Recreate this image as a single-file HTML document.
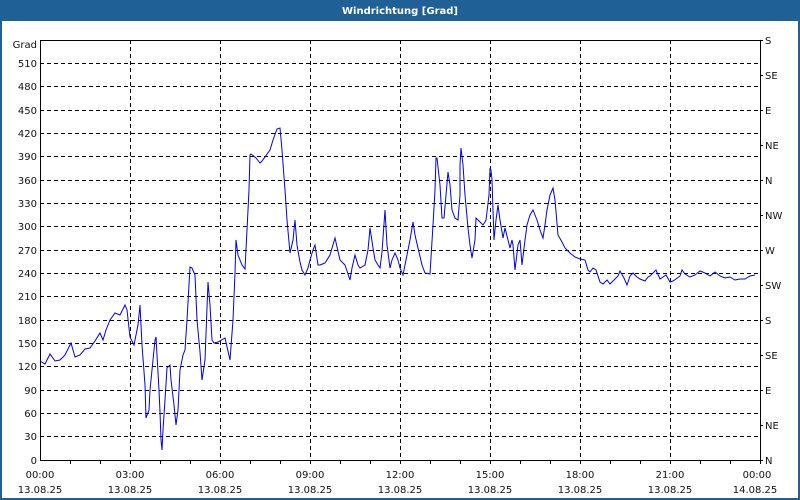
<!DOCTYPE html>
<html><head><meta charset="utf-8"><style>
html,body{margin:0;padding:0;background:#fff}
svg{display:block}
text{font-family:"DejaVu Sans","Liberation Sans",sans-serif;font-size:10px;fill:#111}
</style></head><body>
<svg width="800" height="500" viewBox="0 0 800 500" xmlns="http://www.w3.org/2000/svg">
<rect x="0" y="0" width="800" height="500" fill="#1f6096"/>
<rect x="2" y="21" width="796" height="477" fill="#fff"/>
<text x="400" y="14" text-anchor="middle" style="font-weight:bold;fill:#fff;font-size:10px">Windrichtung [Grad]</text>
<g stroke="#000" stroke-width="1" stroke-dasharray="4,3" fill="none" shape-rendering="crispEdges">
<path d="M40 436.5H760M40 413.5H760M40 390.5H760M40 366.5H760M40 343.5H760M40 320.5H760M40 296.5H760M40 273.5H760M40 250.5H760M40 226.5H760M40 203.5H760M40 180.5H760M40 156.5H760M40 133.5H760M40 110.5H760M40 86.5H760M40 63.5H760"/>
<path d="M130.5 40V460M220.5 40V460M310.5 40V460M400.5 40V460M490.5 40V460M580.5 40V460M670.5 40V460"/>
</g>
<g stroke="#000" stroke-width="1" fill="none" shape-rendering="crispEdges">
<path d="M40.5 40V460.5H760.5V40M40 40.5H760"/>
<path d="M70.5 460v4M100.5 460v4M130.5 460v4M160.5 460v4M190.5 460v4M220.5 460v4M250.5 460v4M280.5 460v4M310.5 460v4M340.5 460v4M370.5 460v4M400.5 460v4M430.5 460v4M460.5 460v4M490.5 460v4M520.5 460v4M550.5 460v4M580.5 460v4M610.5 460v4M640.5 460v4M670.5 460v4M700.5 460v4M730.5 460v4M760.5 460v4"/>
<path d="M760 40.5h3M760 75.5h3M760 110.5h3M760 145.5h3M760 180.5h3M760 215.5h3M760 250.5h3M760 285.5h3M760 320.5h3M760 355.5h3M760 390.5h3M760 425.5h3M760 460.5h3"/>
</g>
<g text-anchor="end">
<text x="37" y="48">Grad</text>
<text x="37" y="67">510</text><text x="37" y="90">480</text><text x="37" y="114">450</text><text x="37" y="137">420</text><text x="37" y="160">390</text><text x="37" y="184">360</text><text x="37" y="207">330</text><text x="37" y="230">300</text><text x="37" y="254">270</text><text x="37" y="277">240</text><text x="37" y="300">210</text><text x="37" y="324">180</text><text x="37" y="347">150</text><text x="37" y="370">120</text><text x="37" y="394">90</text><text x="37" y="417">60</text><text x="37" y="440">30</text><text x="37" y="464">0</text>
</g>
<g>
<text x="765" y="44">S</text><text x="765" y="79">SE</text><text x="765" y="114">E</text><text x="765" y="149">NE</text><text x="765" y="184">N</text><text x="765" y="219">NW</text><text x="765" y="254">W</text><text x="765" y="289">SW</text><text x="765" y="324">S</text><text x="765" y="359">SE</text><text x="765" y="394">E</text><text x="765" y="429">NE</text><text x="765" y="464">N</text>
</g>
<g text-anchor="middle">
<text x="40" y="478">00:00</text><text x="130" y="478">03:00</text><text x="220" y="478">06:00</text><text x="310" y="478">09:00</text><text x="400" y="478">12:00</text><text x="490" y="478">15:00</text><text x="580" y="478">18:00</text><text x="670" y="478">21:00</text><text x="757" y="478">00:00</text>
<text x="40" y="493">13.08.25</text><text x="130" y="493">13.08.25</text><text x="220" y="493">13.08.25</text><text x="310" y="493">13.08.25</text><text x="400" y="493">13.08.25</text><text x="490" y="493">13.08.25</text><text x="580" y="493">13.08.25</text><text x="670" y="493">13.08.25</text><text x="755" y="493">14.08.25</text>
</g>
<polyline fill="none" stroke="#0000ee" stroke-width="1" points="40,361 45,364 50,354 55,361 60,360 65,355 71,343 75,357 80,355 85,349 90,348 95,341 100,333 103,340 106,330 110,320 115,313 120,315 125,305 127,310 130,337 134,345 138,325 140,305 142,345 145,385 146,418 149,410 150,390 153,360 155,340 156,337 157,355 159,390 160,412 161,440 162,450 163,430 165,400 167,368 170,365 171,380 174,405 176,425 178,410 180,370 183,355 185,350 187,320 190,267 192,268 195,275 197,320 200,352 202,380 205,360 208,282 210,305 212,340 214,343 218,342 225,338 230,360 233,320 235,273 236,240 238,255 242,265 245,269 247,230 249,190 250,155 251,154 256,158 260,163 262,161 270,150 273,140 277,129 280,128 282,150 285,190 287,220 290,253 293,240 295,220 297,245 300,262 302,270 305,275 308,268 310,260 313,250 315,245 318,265 320,265 325,263 330,255 335,238 340,260 345,265 350,280 352,268 355,255 358,265 360,268 365,265 368,250 370,228 373,248 375,260 378,265 380,268 382,252 385,210 387,245 390,268 392,260 395,253 398,260 400,268 403,275 407,255 410,240 413,222 415,235 418,248 422,265 425,273 430,274 433,225 435,190 436,158 437,158 440,185 442,218 444,218 446,195 448,172 450,185 452,210 455,218 458,220 460,195 460,165 461,148 463,165 465,195 468,228 470,245 472,258 475,240 476,218 477,219 480,222 483,225 485,222 486,220 489,195 490,168 491,170 492,180 494,240 496,220 498,205 500,220 503,238 505,228 508,240 510,248 512,240 513,245 515,270 518,245 520,240 522,265 525,240 527,225 530,215 533,210 535,215 537,220 540,230 543,238 545,225 547,210 550,195 553,188 555,200 558,235 562,242 565,248 570,253 575,257 580,259 585,260 588,270 590,272 593,268 596,270 600,282 603,284 607,280 610,284 613,281 618,276 620,271 624,278 627,285 630,276 633,273 637,277 640,279 645,281 648,277 650,276 653,273 656,270 660,279 663,277 666,275 670,282 673,281 676,279 680,276 682,270 685,274 690,277 695,275 700,271 705,273 710,276 715,272 720,276 725,278 730,277 735,280 740,279 745,279 750,276 755,275"/>
</svg>
</body></html>
